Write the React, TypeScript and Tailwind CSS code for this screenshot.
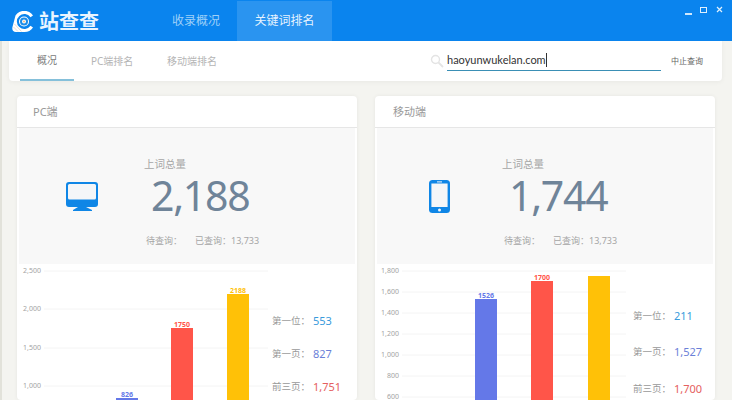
import React from "react";

interface Bar {
  x: number;
  top: number;
  color: string;
  label?: string;
}

interface SideStat {
  label: string;
  value: string;
  color: string;
}

interface CardProps {
  title: string;
  titleClass: string;
  total: string;
  icon: React.ReactNode;
  ticks: { label: string; y: number }[];
  bars: Bar[];
  stats: SideStat[];
  statsClass: string;
  statsGap: string;
}

// Monitor icon for the PC card
function MonitorIcon() {
  return (
    <svg width="32" height="29" viewBox="0 0 32 29">
      <rect x="0" y="0" width="32" height="25" rx="3" fill="#0f86e6" />
      <rect x="2" y="2" width="28" height="15.5" rx="1.5" fill="#f4f6f8" />
      <path d="M12 25h8l6 3v1H7v-1z" fill="#0f86e6" />
    </svg>
  );
}

// Phone icon for the mobile card
function PhoneIcon() {
  return (
    <svg width="21" height="33" viewBox="0 0 21 33" className="-ml-[1px]">
      <rect x="0" y="0" width="21" height="33" rx="3.5" fill="#0f86e6" />
      <rect x="2.4" y="3.5" width="16.2" height="23.5" fill="#f4f6f8" />
      <rect x="8" y="1.4" width="5" height="1" fill="#f4f6f8" />
      <circle cx="10.5" cy="30" r="1.5" fill="#f4f6f8" />
    </svg>
  );
}

function Logo() {
  return (
    <svg width="24" height="22" viewBox="0 0 24 22">
      <path
        d="M21 4.500A10.500 10.500 0 0 0 3.500 4.500L0.600 15.500C-0.400 19 1 21 4 21H12A10.500 10.500 0 0 0 21 16.500L18.500 14.800A7.500 7.500 0 1 1 18.500 6.200Z"
        fill="#ffffff"
      />
      <circle cx="12" cy="10.500" r="5" fill="#ffffff" />
      <circle cx="12" cy="10.500" r="4" fill="#1c8ce8" />
      <circle cx="12" cy="10.500" r="2" fill="#ffffff" />
      <circle cx="12" cy="10.500" r="0.900" fill="#f0b070" />
      <path d="M2.500 13l7 7.500M1.500 16l4.500 4.500" stroke="#e0cfc6" strokeWidth="0.800" />
    </svg>
  );
}

function Chart({ ticks, bars }: { ticks: CardProps["ticks"]; bars: Bar[] }) {
  return (
    <svg width="255" height="136" viewBox="0 0 255 136" className="shrink-0">
      {ticks.map((t) => (
        <g key={t.label}>
          <line x1="27" x2="251" y1={t.y} y2={t.y} stroke="#f4f4f4" />
          <text x="24" y={t.y + 2} textAnchor="end" fontSize="7" fill="#a3a3a3">
            {t.label}
          </text>
        </g>
      ))}
      {bars.map((b) => (
        <g key={b.x}>
          <rect x={b.x} y={b.top} width="22" height={136 - b.top} fill={b.color} />
          {b.label && (
            <text x={b.x + 11} y={b.top - 1.5} textAnchor="middle" fontSize="7" fontWeight="700" fill={b.color}>
              {b.label}
            </text>
          )}
        </g>
      ))}
    </svg>
  );
}

function StatCard({ title, titleClass, total, icon, ticks, bars, stats, statsClass, statsGap }: CardProps) {
  return (
    <div className="w-[340px] h-[304px] bg-white rounded-sm shadow-[0_0_4px_rgba(0,0,0,0.06)] overflow-hidden">
      <div className={`h-[32px] border-b border-[#e6e6e6] flex items-center pt-[2px] text-[11px] text-[#999999] ${titleClass}`}>
        {title}
      </div>
      <div className="h-[136px] bg-[#f8f8f8] mx-[2px] flex">
        <div className="w-[125px] flex items-center justify-center">{icon}</div>
        <div className="flex flex-col">
          <div className="text-[10.5px] leading-[14px] text-[#a6a6a6] mt-[29px]">上词总量</div>
          <div className="text-[41px] leading-[40px] tracking-[-1.3px] text-[#6f8499] ml-[7px] mt-[4px]">{total}</div>
          <div className="flex gap-[13px] text-[9px] leading-[12px] text-[#a6a6a6] ml-[2px] mt-[20px]">
            <span>待查询：</span>
            <span>已查询：13,733</span>
          </div>
        </div>
      </div>
      <div className="flex">
        <Chart ticks={ticks} bars={bars} />
        <div className={`flex flex-col ${statsClass} ${statsGap}`}>
          {stats.map((s) => (
            <div key={s.label} className="flex items-center h-[16px]">
              <span className="w-[41px] text-[9.5px] text-[#999999]">{s.label}</span>
              <span className="text-[11px]" style={{ color: s.color }}>
                {s.value}
              </span>
            </div>
          ))}
        </div>
      </div>
    </div>
  );
}

export default function App() {
  return (
    <div className="w-[732px] h-[400px] overflow-hidden bg-[#f4f4f0] font-['Noto_Sans','Noto_Sans_CJK_SC',sans-serif]">
      {/* Top bar */}
      <div className="h-[41px] bg-[#0a84ee] flex relative">
        <div className="w-[172px] flex items-center pl-[12px] pt-[2px] gap-[3px]">
          <Logo />
          <span className="text-[20px] leading-none font-bold text-[#eaf5ff]">站查查</span>
        </div>
        <div className="w-[65px] text-[12px] leading-[41px] text-[#9fd0f8]">收录概况</div>
        <div className="w-[95px] h-[40px] mt-[1px] bg-[#2a94f0] text-[12px] leading-[40px] text-center text-[#e6f3ff]">
          关键词排名
        </div>
        <div className="absolute right-[9px] top-[5px] flex items-center gap-[8px]">
          <div className="w-[7px] h-[1.5px] bg-[#cfe7fb] mt-[8px]" />
          <div className="w-[7px] h-[6px] border border-[#dff0fd] mr-[1px]" />
          <svg width="7" height="7" viewBox="0 0 7 7">
            <path d="M1 1l5 5M6 1L1 6" stroke="#dff0fd" strokeWidth="1.2" />
          </svg>
        </div>
      </div>

      <div className="h-[359px] border-l-2 border-[#e2e2da]">
        {/* Tabs + search */}
        <div className="ml-[7px] mr-[10px] h-[40px] bg-white rounded-b-sm shadow-[0_1px_5px_rgba(0,0,0,0.05)] flex items-center">
          <div className="w-[54px] h-[40px] ml-[11px] border-b-2 border-[#85c0da] text-[10px] leading-[39px] text-center text-[#7a7a7a]">
            概况
          </div>
          <div className="w-[93px] pl-[17px] text-[10px] text-[#b5b5b5] whitespace-nowrap">PC端排名</div>
          <div className="text-[10px] text-[#b5b5b5] whitespace-nowrap">移动端排名</div>
          <div className="ml-auto flex items-center mr-[19px]">
            <svg width="14" height="14" viewBox="0 0 14 14" className="mr-[3px]">
              <circle cx="5.5" cy="5.5" r="4" fill="none" stroke="#e4e4e4" strokeWidth="1.4" />
              <path d="M8.5 8.5l4.500 4.500" stroke="#e4e4e4" strokeWidth="1.8" />
            </svg>
            <div className="w-[214px] h-[20px] -mt-[1px] border-b border-[#3a8fb5] text-[11px] text-[#333333] font-['Lato','Noto_Sans',sans-serif] flex items-center">
              haoyunwukelan.com
              <span className="w-px h-[14px] bg-[#333333]" />
            </div>
            <span className="ml-[10px] text-[8px] text-[#666666] whitespace-nowrap">中止查询</span>
          </div>
        </div>

        {/* Cards */}
        <div className="flex gap-[18px] pl-[15px] pt-[15px]">
          <StatCard
            title="PC端"
            titleClass="pl-[16px]"
            total="2,188"
            icon={<MonitorIcon />}
            ticks={[
              { label: "2,500", y: 7 },
              { label: "2,000", y: 45 },
              { label: "1,500", y: 84 },
              { label: "1,000", y: 122 },
            ]}
            bars={[
              { x: 99, top: 134, color: "#6478e8", label: "826" },
              { x: 154, top: 64, color: "#ff5549", label: "1750" },
              { x: 210, top: 30, color: "#ffc107", label: "2188" },
            ]}
            stats={[
              { label: "第一位：", value: "553", color: "#3a9bdc" },
              { label: "第一页：", value: "827", color: "#6b7fd8" },
              { label: "前三页：", value: "1,751", color: "#e56060" },
            ]}
            statsClass="pt-[49px]"
            statsGap="gap-[17px]"
          />
          <StatCard
            title="移动端"
            titleClass="pl-[18px]"
            total="1,744"
            icon={<PhoneIcon />}
            ticks={[
              { label: "1,800", y: 7 },
              { label: "1,600", y: 28 },
              { label: "1,400", y: 49 },
              { label: "1,200", y: 70 },
              { label: "1,000", y: 91 },
              { label: "800", y: 112 },
              { label: "600", y: 133 },
            ]}
            bars={[
              { x: 100, top: 35, color: "#6478e8", label: "1526" },
              { x: 156, top: 17, color: "#ff5549", label: "1700" },
              { x: 213, top: 12, color: "#ffc107" },
            ]}
            stats={[
              { label: "第一位：", value: "211", color: "#3a9bdc" },
              { label: "第一页：", value: "1,527", color: "#6b7fd8" },
              { label: "前三页：", value: "1,700", color: "#e56060" },
            ]}
            statsClass="pt-[44px] pl-[3px]"
            statsGap="gap-[20.5px]"
          />
        </div>
      </div>
    </div>
  );
}
